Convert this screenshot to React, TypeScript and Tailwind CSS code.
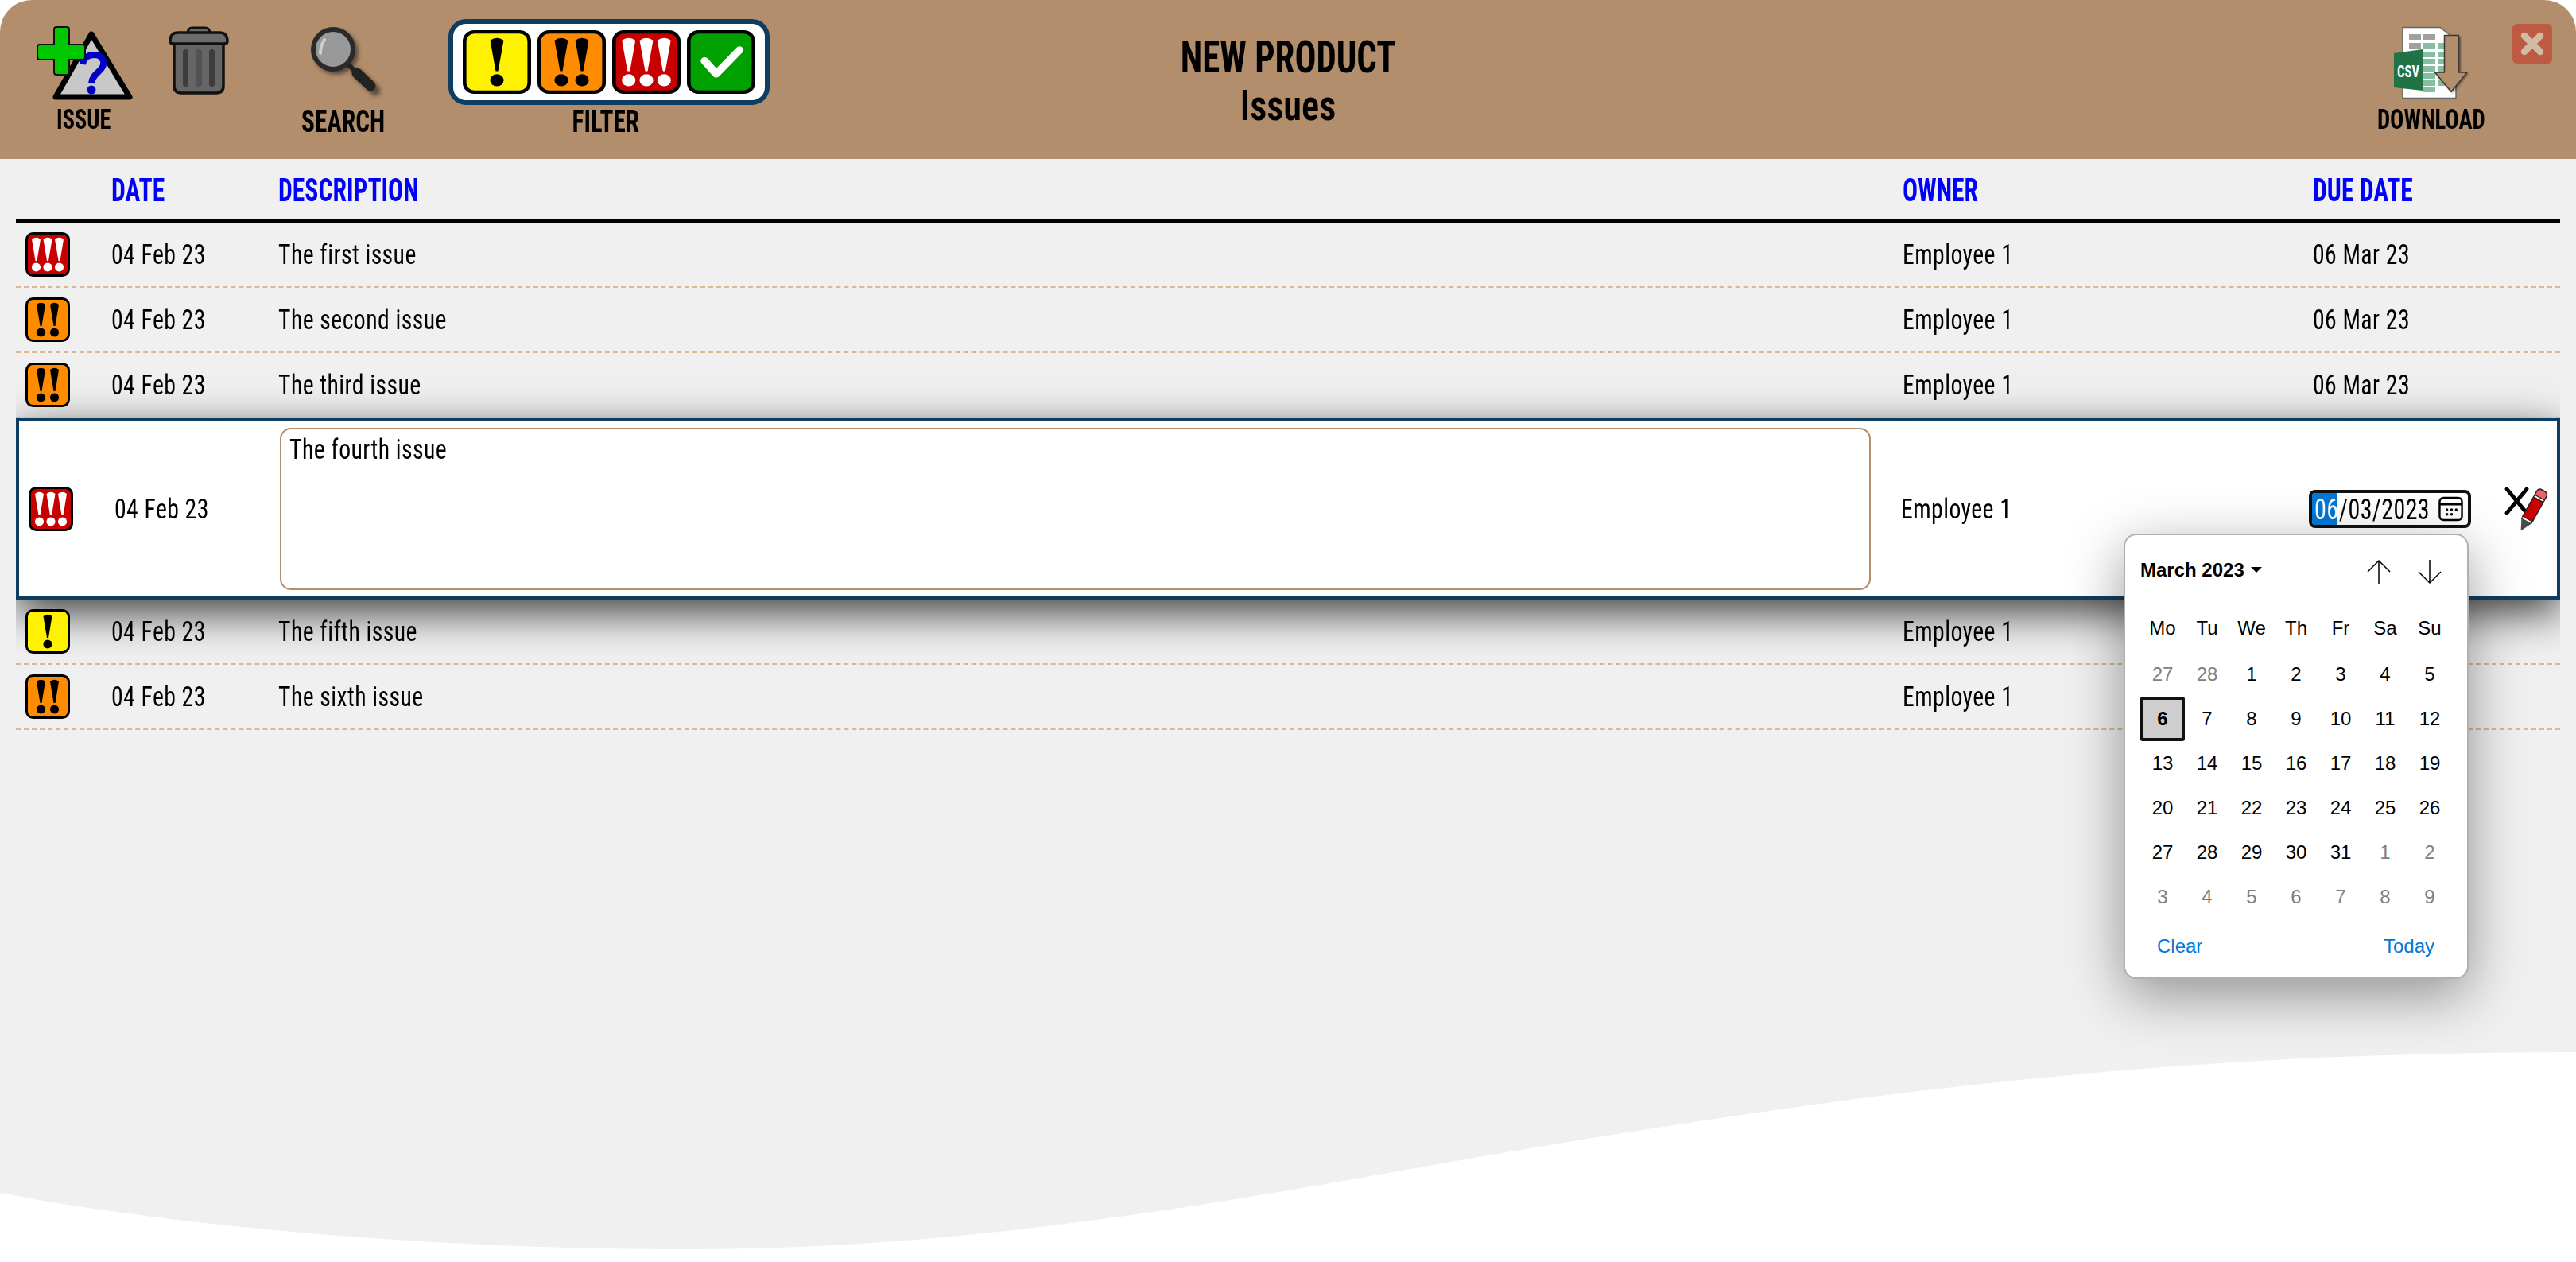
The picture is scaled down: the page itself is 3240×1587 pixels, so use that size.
import React from "react";

const cond = "font-['Roboto','Liberation_Sans',sans-serif] [font-stretch:62%]";
const headX = "inline-block whitespace-nowrap origin-left scale-x-[.79]";
const bodyX = "inline-block whitespace-nowrap origin-left scale-x-[.85]";

function Severity({ level, className }: { level: 1 | 2 | 3 | 4; className: string }) {
  const fill = { 1: "#fff200", 2: "#ff8c00", 3: "#c80000", 4: "#00a000" }[level];
  const ink = level === 3 ? "#ffffff" : "#000000";
  const centers = level === 1 ? [28] : level === 2 ? [19.5, 36.5] : level === 3 ? [13.5, 28, 42.5] : [];
  return (
    <svg viewBox="0 0 56 56" preserveAspectRatio="none" className={className}>
      <rect x="1.5" y="1.5" width="53" height="53" rx="8" fill={fill} stroke="#000" strokeWidth="3" />
      {centers.map((c) => (
        <g key={c} fill={ink}>
          <path d={`M${c - 5.5} 9 Q${c} 4.5 ${c + 5.5} 9 L${c + 1} 36 L${c - 1} 36 Z`} />
          <ellipse cx={c} cy="44" rx="5.6" ry="5.4" />
        </g>
      ))}
      {level === 4 && (
        <path d="M14.5 27 L24 38.5 L43 17.5" fill="none" stroke="#fff" strokeWidth="6.5" strokeLinecap="round" strokeLinejoin="round" />
      )}
    </svg>
  );
}

function IssueIcon() {
  return (
    <svg viewBox="40 30 130 100" className="w-[130px] h-[100px]">
      <path d="M115 43 L163 122 L70 122 Z" fill="#c8c8c8" stroke="#000" strokeWidth="7" strokeLinejoin="round" />
      <path d="M104 81 C105 72 112 69 119 69 C127 69 131 75 130 81 C129 90 116 92 115 105" fill="none" stroke="#0000c8" strokeWidth="8" />
      <circle cx="115" cy="113" r="5.5" fill="#0000c8" />
      <path d="M71 34 H84 Q87 34 87 37 V56 H104 Q107 56 107 59 V72 Q107 75 104 75 H87 V91 Q87 94 84 94 H71 Q68 94 68 91 V75 H50 Q47 75 47 72 V59 Q47 56 50 56 H68 V37 Q68 34 71 34 Z" fill="#00c800" stroke="#111" strokeWidth="2" />
    </svg>
  );
}

function TrashIcon() {
  return (
    <svg viewBox="200 30 100 100" className="w-[100px] h-[100px]">
      <path d="M236 42 Q236 35 242 35 H258 Q264 35 264 42" fill="#6a6a6a" stroke="#111" strokeWidth="3" />
      <path d="M219 54 H281 V108 Q281 117 272 117 H228 Q219 117 219 108 Z" fill="#666" stroke="#111" strokeWidth="3.5" />
      <path d="M214 52 Q214 41 224 41 H276 Q286 41 286 52 Q286 55 282 55 H218 Q214 55 214 52 Z" fill="#6c6c6c" stroke="#111" strokeWidth="3.5" />
      <rect x="230" y="62" width="7" height="47" rx="3.5" fill="#3d3d3d" />
      <rect x="246" y="62" width="8" height="47" rx="4" fill="#525252" />
      <rect x="263" y="62" width="7" height="47" rx="3.5" fill="#3d3d3d" />
    </svg>
  );
}

function SearchIcon() {
  return (
    <svg viewBox="382 30 100 100" className="w-[100px] h-[100px]">
      <defs>
        <filter id="sb" x="-30%" y="-30%" width="160%" height="160%"><feGaussianBlur stdDeviation="2.5" /></filter>
      </defs>
      <g filter="url(#sb)" opacity="0.6">
        <circle cx="423" cy="66" r="28" fill="#222" />
        <path d="M449 92 L472 114" stroke="#222" strokeWidth="13" strokeLinecap="round" />
      </g>
      <path d="M438 81 L449 92" stroke="#222" strokeWidth="6" />
      <path d="M449 92 L466 108" stroke="#222" strokeWidth="13" strokeLinecap="round" />
      <circle cx="419" cy="62" r="25" fill="#999" stroke="#2a2a2a" strokeWidth="6" />
      <path d="M408 50 Q403 58 403 67" fill="none" stroke="#cfcfcf" strokeWidth="4" strokeLinecap="round" />
    </svg>
  );
}

function DownloadIcon() {
  const rows = [73, 82, 91, 100, 109];
  return (
    <svg viewBox="3008 30 100 100" className="w-[100px] h-[100px]">
      <defs>
        <filter id="ab" x="-30%" y="-30%" width="160%" height="160%"><feGaussianBlur stdDeviation="1.5" /></filter>
      </defs>
      <path d="M3022 34.5 H3069 L3089 50 V123.5 H3022 Z" fill="#fff" stroke="#666" strokeWidth="1.5" />
      <rect x="3030" y="43" width="15" height="7" fill="#a0a0a0" />
      <rect x="3048" y="43" width="15" height="7" fill="#a0a0a0" />
      <rect x="3030" y="54" width="15" height="7" fill="#a0a0a0" />
      <rect x="3048" y="54" width="15" height="7" fill="#85bf9f" />
      <rect x="3066" y="54" width="18" height="7" fill="#85bf9f" />
      {rows.map((y) => (
        <g key={y}>
          <rect x="3048" y={y - 8} width="15" height="7" fill="#85bf9f" />
          <rect x="3066" y={y - 8} width="18" height="7" fill="#85bf9f" />
        </g>
      ))}
      <rect x="3048" y="109" width="15" height="7" fill="#85bf9f" />
      <path d="M3011 67 L3047 62 V114 L3011 110 Z" fill="#217346" />
      <text x="3029" y="97" textAnchor="middle" fill="#fff" fontSize="21" fontFamily="'Roboto',sans-serif" style={{ fontStretch: "62%" }} textLength="28" lengthAdjust="spacingAndGlyphs">CSV</text>
      <path d="M3076 46 H3095 V92 H3105 L3085 117 L3064 93 H3076 Z" fill="#000" opacity="0.45" filter="url(#ab)" />
      <path d="M3074.5 44.5 H3092.5 V91 H3103 L3083 115.5 L3062.5 91 H3074.5 Z" fill="#b28e6c" stroke="#3a3a3a" strokeWidth="1.5" strokeLinejoin="round" />
    </svg>
  );
}

function Header() {
  return (
    <header className={`flex h-[200px] bg-[#b28e6c] rounded-t-[40px] text-black font-bold leading-none ${cond}`}>
      <div className="ml-[40px] w-[130px] pt-[30px] flex flex-col items-center">
        <IssueIcon />
        <div className="text-[35px] mt-[3px] scale-x-[.81]">ISSUE</div>
      </div>
      <div className="ml-[30px] w-[100px] pt-[30px]"><TrashIcon /></div>
      <div className="ml-[82px] w-[100px] pt-[30px] flex flex-col items-center">
        <SearchIcon />
        <div className="text-[39px] mt-[4px] scale-x-[.8] whitespace-nowrap">SEARCH</div>
      </div>
      <div className="ml-[82px] w-[404px] flex flex-col items-center pt-[24px]">
        <div className="w-[404px] h-[108px] bg-white border-[6px] border-[#0e3d62] rounded-[22px] flex items-center justify-center gap-[8px]">
          <Severity level={1} className="w-[86px] h-[80px]" />
          <Severity level={2} className="w-[86px] h-[80px]" />
          <Severity level={3} className="w-[86px] h-[80px]" />
          <Severity level={4} className="w-[86px] h-[80px]" />
        </div>
        <div className="text-[39px] mt-[2px] mr-[8px] scale-x-[.8]">FILTER</div>
      </div>
      <div className="w-[1304px] flex flex-col items-center pt-[44px]">
        <div className="text-[56px] leading-[56px] whitespace-nowrap scale-x-[.8]">NEW PRODUCT</div>
        <div className="text-[54px] leading-[65px] font-semibold scale-x-[.86]">Issues</div>
      </div>
      <div className="ml-[686px] w-[200px] pt-[30px] flex flex-col items-center">
        <DownloadIcon />
        <div className="text-[35px] mt-[3px] scale-x-[.82]">DOWNLOAD</div>
      </div>
      <div className="ml-[2px] mt-[30px] w-[50px] h-[50px] rounded-[6px] bg-[#bd5a43] flex items-center justify-center">
        <svg viewBox="0 0 50 50" className="w-[50px] h-[50px]">
          <path d="M15 15 L35 35 M35 15 L15 35" stroke="#d0bba5" strokeWidth="8.5" strokeLinecap="round" />
        </svg>
      </div>
    </header>
  );
}

const rowsTop = [
  { level: 3, desc: "The first issue", due: "06 Mar 23" },
  { level: 2, desc: "The second issue", due: "06 Mar 23" },
  { level: 2, desc: "The third issue", due: "06 Mar 23" },
] as const;
const rowsBottom = [
  { level: 1, desc: "The fifth issue" },
  { level: 2, desc: "The sixth issue" },
] as const;

function Row({ level, desc, due }: { level: 1 | 2 | 3; desc: string; due?: string }) {
  return (
    <div className={`relative z-[6] flex items-center h-[82px] border-b-2 border-dashed border-[#d9b893] text-[35px] tracking-[0.5px] text-black ${cond}`}>
      <div className="w-[120px] pl-[12px]"><Severity level={level} className="block w-[56px] h-[56px]" /></div>
      <div className="w-[210px] pt-[3px]"><span className={bodyX}>04 Feb 23</span></div>
      <div className="w-[2043px] pt-[3px]"><span className={bodyX}>{desc}</span></div>
      <div className="w-[515px] pt-[3px]"><span className={bodyX}>Employee 1</span></div>
      {due && <div className="pt-[3px] pl-[1px]"><span className={bodyX}>{due}</span></div>}
    </div>
  );
}

const weeks: [string, boolean][][] = [
  [["27", true], ["28", true], ["1", false], ["2", false], ["3", false], ["4", false], ["5", false]],
  [["6", false], ["7", false], ["8", false], ["9", false], ["10", false], ["11", false], ["12", false]],
  [["13", false], ["14", false], ["15", false], ["16", false], ["17", false], ["18", false], ["19", false]],
  [["20", false], ["21", false], ["22", false], ["23", false], ["24", false], ["25", false], ["26", false]],
  [["27", false], ["28", false], ["29", false], ["30", false], ["31", false], ["1", true], ["2", true]],
  [["3", true], ["4", true], ["5", true], ["6", true], ["7", true], ["8", true], ["9", true]],
];

function Calendar() {
  return (
    <div className="absolute z-10 left-[2647px] top-[141px] w-[434px] h-[560px] bg-white rounded-[16px] border-2 border-[#b0b0b0] shadow-[0_20px_70px_rgba(0,0,0,0.4)] font-['Liberation_Sans',sans-serif] text-[24px] text-black tracking-normal px-[19px]">
      <div className="flex items-center h-[87px]">
        <span className="font-bold">March 2023</span>
        <svg viewBox="0 0 14 7" className="w-[14px] h-[7px] ml-[8px]"><path d="M0 0 H14 L7 7 Z" fill="#000" /></svg>
        <svg viewBox="0 0 30 32" className="w-[30px] h-[32px] ml-[132px] mt-[4px]"><path d="M15 31 V2 M1 16 L15 2 L29 16" fill="none" stroke="#000" strokeWidth="1.5" /></svg>
        <svg viewBox="0 0 30 32" className="w-[30px] h-[32px] ml-[34px] mt-[4px]"><path d="M15 1 V30 M1 16 L15 30 L29 16" fill="none" stroke="#000" strokeWidth="1.5" /></svg>
      </div>
      <div className="grid grid-cols-7 w-[392px] h-[60px] items-center text-center">
        {["Mo", "Tu", "We", "Th", "Fr", "Sa", "Su"].map((d) => <div key={d}>{d}</div>)}
      </div>
      <div className="grid grid-cols-7 w-[392px] auto-rows-[56px] text-center">
        {weeks.flat().map(([d, muted], i) =>
          i === 7 ? (
            <div key={i} className="flex items-center justify-center font-bold bg-[#cecece] border-4 border-[#111] rounded-[3px]">{d}</div>
          ) : (
            <div key={i} className={`flex items-center justify-center ${muted ? "text-[#808080]" : ""}`}>{d}</div>
          ),
        )}
      </div>
      <div className="flex justify-between text-[#0078d7] pl-[21px] pr-[22px] mt-[16px]">
        <span>Clear</span>
        <span>Today</span>
      </div>
    </div>
  );
}

function EditingRow() {
  return (
    <div className={`relative flex items-center h-[228px] bg-white border-4 border-[#0e3d62] shadow-[0_16px_50px_rgba(0,0,0,0.75)] text-[35px] tracking-[0.5px] text-black ${cond}`}>
      <div className="w-[120px] pl-[12px]"><Severity level={3} className="block w-[56px] h-[56px]" /></div>
      <div className="w-[208px] pt-[3px]"><span className={bodyX}>04 Feb 23</span></div>
      <div className="w-[2039px] h-[204px]">
        <div className="w-[2001px] h-[204px] rounded-[14px] border-2 border-[#b28e6c] bg-white px-[10px] py-[5px] leading-[42px]">
          <span className={bodyX}>The fourth issue</span>
        </div>
      </div>
      <div className="w-[513px] pt-[3px]"><span className={bodyX}>Employee 1</span></div>
      <div className="w-[204px] h-[48px] shrink-0 border-4 border-[#111] rounded-[8px] flex items-center overflow-hidden text-[36px]">
        <span className="bg-[#0078d7] text-white h-[40px] leading-[42px] w-[32px] text-center shrink-0"><span className="inline-block scale-x-[.84]">06</span></span>
        <span className="inline-block whitespace-nowrap origin-left scale-x-[.83] ml-[2px] w-[124px] pt-[2px]">/03/2023</span>
        <svg viewBox="0 0 32 32" className="w-[31px] h-[32px] ml-auto mr-[6px] shrink-0">
          <rect x="1.5" y="1.5" width="29" height="29" rx="5" fill="#fff" stroke="#000" strokeWidth="2.5" />
          <path d="M2 10 H30" stroke="#000" strokeWidth="2.5" />
          <g fill="#000">
            <circle cx="11" cy="17" r="1.8" /><circle cx="17" cy="17" r="1.8" /><circle cx="23" cy="17" r="1.8" />
            <circle cx="11" cy="23" r="1.8" /><circle cx="17" cy="23" r="1.8" />
          </g>
        </svg>
      </div>
      <svg viewBox="0 0 60 60" className="w-[60px] h-[60px] ml-[38px] shrink-0">
        <path d="M7 5 L31 34 M32 5 L7 35" stroke="#000" strokeWidth="5" strokeLinecap="round" />
        <g transform="translate(53 7) rotate(29.3)">
          <path d="M-7 10 V5 Q-7 0 -2 0 H2 Q7 0 7 5 V10 Z" fill="#f06068" stroke="#222" strokeWidth="1.5" />
          <rect x="-7" y="10" width="14" height="3" fill="#fff" stroke="#222" strokeWidth="1" />
          <rect x="-7" y="13" width="14" height="28" fill="#c80000" stroke="#222" strokeWidth="1.5" />
          <rect x="-7" y="41" width="14" height="3" fill="#fff" stroke="#222" strokeWidth="1" />
          <path d="M-7 44 H7 L0 58 Z" fill="#4a4a4a" />
        </g>
      </svg>
      <Calendar />
    </div>
  );
}

export default function App() {
  return (
    <div className="relative h-[1587px] w-[3240px] bg-white overflow-hidden">
      <Header />
      <main className="h-[1387px] bg-[#f0f0f0] px-[20px]">
        <div className="h-full overflow-hidden">
          <div className={`relative z-[6] flex items-center h-[80px] pt-[3px] border-b-4 border-black text-[40px] font-bold text-[#0000ff] ${cond}`}>
            <div className="w-[120px]" />
            <div className="w-[210px]"><span className={headX}>DATE</span></div>
            <div className="w-[2043px]"><span className={headX}>DESCRIPTION</span></div>
            <div className="w-[515px]"><span className={headX}>OWNER</span></div>
            <div className="pl-[1px]"><span className={headX}>DUE DATE</span></div>
          </div>
          {rowsTop.map((r) => <Row key={r.desc} {...r} />)}
          <EditingRow />
          {rowsBottom.map((r) => <Row key={r.desc} {...r} />)}
        </div>
      </main>
      <svg viewBox="0 1300 3240 287" className="absolute z-20 left-0 bottom-0 w-[3240px] h-[287px]">
        <path d="M0 1500 C180 1535 500 1571 868 1571 C1250 1571 1600 1500 1860 1455 C2300 1380 2700 1323 3240 1323 V1587 H0 Z" fill="#fff" />
      </svg>
    </div>
  );
}
